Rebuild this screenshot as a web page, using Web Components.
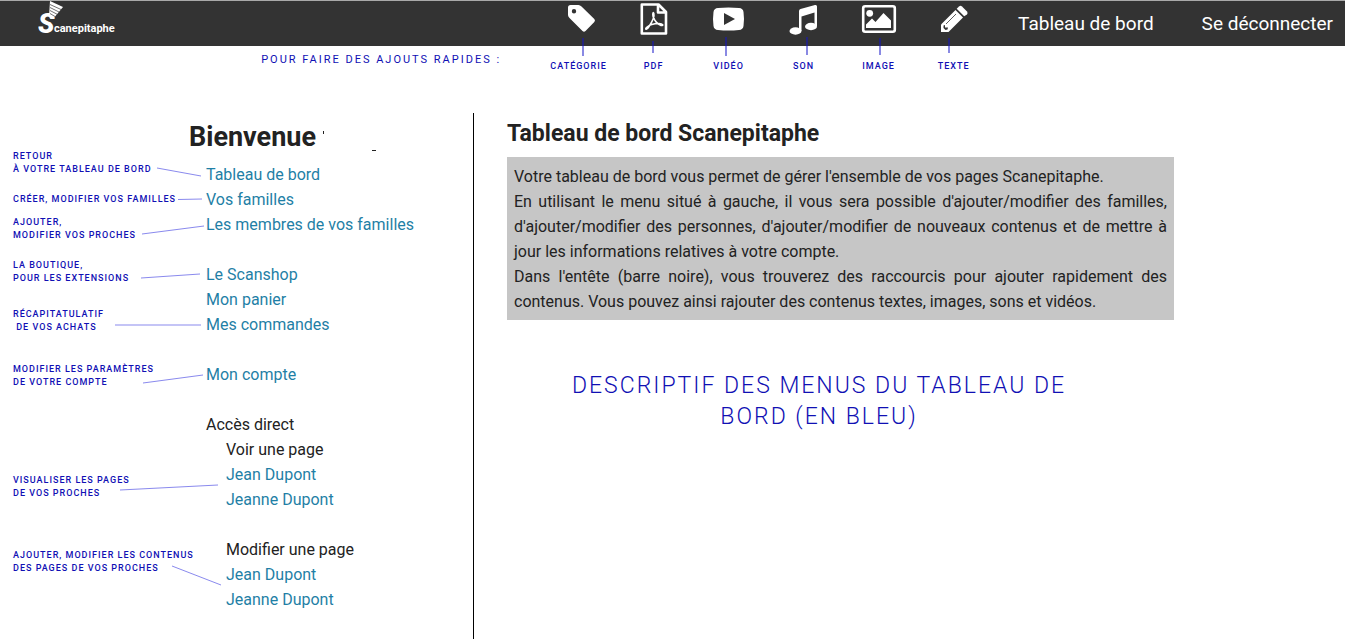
<!DOCTYPE html>
<html lang="fr">
<head>
<meta charset="utf-8">
<meta name="viewport" content="width=device-width, initial-scale=1">
<title>Tableau de bord Scanepitaphe</title>
<style>
  body {
    margin: 0;
    background: #fff;
    color: #222;
    font: 16px/25px Roboto, "Liberation Sans", sans-serif;
    --note: #1010b4;
    --link: #1f7fa6;
  }
</style>
</head>
<body>
<dashboard-page></dashboard-page>

<script>
class BaseElement extends HTMLElement {
  connectedCallback() {
    if (this.shadowRoot) return;
    const template = document.createElement('template');
    template.innerHTML = this.constructor.markup;
    this.attachShadow({ mode: 'open' }).append(template.content.cloneNode(true));
  }
}

/* Brand: a spiral-bound cone over the initial */
class SiteLogo extends BaseElement {
  static markup = `
    <style>
      :host { display: block; }
      a { display: block; color: #fff; text-decoration: none; }
      svg { display: block; }
      text { fill: #fff; font-family: Roboto, sans-serif; font-weight: 700; }
      .initial { font-size: 27px; font-weight: 900; font-style: italic; }
      .rest { font-size: 11px; }
    </style>
    <a href="#" aria-label="Scanepitaphe">
      <svg width="84" height="44" viewBox="38 1 84 44">
        <text class="initial" x="38" y="33">S</text>
        <text class="rest" x="54" y="32">canepitaphe</text>
        <path d="M50 1L63 7L53 19L49 17Z" fill="#fff"/>
        <path d="M50 4.500L61 9.500M50 7.500L59 12M50 10.500L57 14.200M50 13.500L55 16.500" stroke="#333" stroke-width=".7"/>
      </svg>
    </a>`;
}

/* Shortcut with its icon in the bar and its caption under it */
class QuickAction extends BaseElement {
  static markup = `
    <style>
      :host { display: block; width: 75px; }
      a { display: block; color: var(--note); text-decoration: none; text-align: center;
          font-size: 9px; line-height: 13px; font-weight: 500; letter-spacing: 1px; text-transform: uppercase; }
      ::slotted(svg) { display: block; }
    </style>
    <a href="#"><slot name="icon"></slot><slot></slot></a>`;
}

class SiteHeader extends BaseElement {
  static markup = `
    <style>
      :host { display: block; box-sizing: border-box; height: 46px; background: #333; border-top: 1px solid #a9a9a9; }
      header { display: flex; align-items: flex-start; padding: 0 12px 0 38px; }
      p { margin: 51px 40px 0 auto; color: var(--note); font-size: 11px; line-height: 16px;
          letter-spacing: 2px; text-transform: uppercase; white-space: nowrap; }
      .actions { display: flex; }
      .links { display: flex; gap: 48px; margin-left: 27px; }
      .links a { color: #fff; text-decoration: none; font-size: 19px; line-height: 45px; white-space: nowrap; }
      .stem { stroke: #1414c8; stroke-opacity: .5; stroke-width: 2; }
      .w { fill: #fff; }
      .k { fill: #333; }
      .o { fill: none; stroke: #fff; }
    </style>
    <header>
      <site-logo></site-logo>
      <p>Pour faire des ajouts rapides :</p>
      <div class="actions">
        <quick-action>
          <svg slot="icon" width="75" height="59" viewBox="541 1 75 59">
            <path class="w" fill-rule="evenodd" d="M570.500 5H578.500Q580 5 581.500 6.500L594.300 19Q595.700 20.500 594.300 22L585.500 31Q584 32.400 582.500 31L569.500 18Q568 16.500 568 15V7.500Q568 5 570.500 5ZM574 9A2.200 2.200 0 1 0 574 13.400A2.200 2.200 0 1 0 574 9Z"/>
            <path class="stem" d="M583 38V56"/>
          </svg>Catégorie</quick-action>
        <quick-action>
          <svg slot="icon" width="75" height="59" viewBox="616 1 75 59">
            <path class="o" stroke-width="2.600" stroke-linejoin="round" d="M641.800 4.500H658.500L666 12V33.500H641.800ZM658 4.500V12.500H666"/>
            <path class="o" stroke-width="1.600" stroke-linejoin="round" stroke-linecap="round" d="M653 13C652 17 656 24 661 25.500C664 26 663 23.500 659 23.500C654 23.500 649 25 646.500 27.500C644.500 30 647 30 649 26.500C652 22 654.500 16 653.800 13.500C653.500 12.500 653.200 12.500 653 13Z"/>
            <path class="stem" d="M653 41V53"/>
          </svg>PDF</quick-action>
        <quick-action>
          <svg slot="icon" width="75" height="59" viewBox="691 1 75 59">
            <path class="w" d="M718 8Q728.500 7 739 8Q743 8.300 743.500 12Q744.500 19 743.500 26Q743 29.700 739 30Q728.500 31 718 30Q714 29.700 713.500 26Q712.500 19 713.500 12Q714 8.300 718 8Z"/>
            <path class="k" d="M724 13L735 19L724 25Z"/>
            <path class="stem" d="M726 37V56"/>
          </svg>Vidéo</quick-action>
        <quick-action>
          <svg slot="icon" width="75" height="59" viewBox="766 1 75 59">
            <path class="w" d="M799 11Q799 9.500 800.500 9L815 5Q817 4.500 817 6.500V26H814.500V12.500L801.500 16.500V31H799Z"/>
            <ellipse class="w" cx="795.500" cy="31" rx="6" ry="3.700"/>
            <ellipse class="w" cx="811" cy="26.500" rx="6" ry="3.700"/>
            <path class="stem" d="M807 37V55"/>
          </svg>Son</quick-action>
        <quick-action>
          <svg slot="icon" width="75" height="59" viewBox="841 1 75 59">
            <rect class="o" stroke-width="2.600" x="863.200" y="6.300" width="31.600" height="25.400" rx="2"/>
            <circle class="w" cx="869.700" cy="13.300" r="3.400"/>
            <path class="w" d="M866 28V24.500L872 18.500L875.500 22L883.500 13L891 20.500V28Z"/>
            <path class="stem" d="M880 38V55"/>
          </svg>Image</quick-action>
        <quick-action>
          <svg slot="icon" width="75" height="59" viewBox="916 1 75 59">
            <path class="w" d="M941 24.500L955.500 10L963 17.500L948.500 32H941Z"/>
            <path class="w" d="M956.700 8.800L959 6.500Q960.500 5.200 962 6.500L967 11.500Q968.200 13 967 14.500L964.200 16.300Z"/>
            <path d="M946 24L956 14" stroke="#333" stroke-width=".8"/>
            <path class="k" d="M943.500 25.500L945 25V27.500H948L947.500 29.500L945.500 30L943.500 28Z"/>
            <path class="stem" d="M949 38V53"/>
          </svg>Texte</quick-action>
      </div>
      <nav class="links">
        <a href="#">Tableau de bord</a>
        <a href="#">Se déconnecter</a>
      </nav>
    </header>`;
}

class CalloutNote extends BaseElement {
  static markup = `
    <style>
      :host { display: block; color: var(--note); font-size: 9px; line-height: 13px; font-weight: 500;
              letter-spacing: 1px; text-transform: uppercase; white-space: nowrap; }
    </style><slot></slot>`;
}

class MenuGroup extends BaseElement {
  static markup = `
    <style>
      :host { display: flex; flex-direction: column; align-items: flex-start; }
      :host([nested]) { padding-left: 20px; }
      ::slotted(a) { color: var(--link); text-decoration: none; }
    </style><slot></slot>`;
}

class SideMenu extends BaseElement {
  static markup = `
    <style>
      :host { display: block; position: relative; }
      .cols { display: grid; grid-template-columns: 176px 1fr; padding-left: 13px; }
      .notes { display: grid; align-content: start; padding-top: 37px;
               grid-template-rows: 43px 23px 43px 49px 55px 111px 75px 26px; }
      h1 { display: flex; gap: 6px; margin: 0; padding: 6px 0; font-size: 27px; line-height: 37px; font-weight: 700; }
      nav { display: grid; gap: 25px; padding-left: 17px; }
      .lines { position: absolute; left: 0; top: 0; fill: none; stroke: #1414dc; stroke-opacity: .5; pointer-events: none; }
    </style>
    <div class="cols">
      <div class="notes">
        <callout-note>Retour<br>à votre tableau de bord</callout-note>
        <callout-note>Créer, modifier vos familles</callout-note>
        <callout-note>Ajouter,<br>modifier vos proches</callout-note>
        <callout-note>La boutique,<br>pour les extensions</callout-note>
        <callout-note>Récapitatulatif<br>&nbsp;de vos achats</callout-note>
        <callout-note>Modifier les paramètres<br>de votre compte</callout-note>
        <callout-note>Visualiser les pages<br>de vos proches</callout-note>
        <callout-note>Ajouter, modifier les contenus<br>des pages de vos proches</callout-note>
      </div>
      <div>
        <h1>Bienvenue
          <svg width="56" height="37" viewBox="321 119 56 37" aria-hidden="true"><path d="M322.500 131V134M371 150.500H375" stroke="#222"/></svg>
        </h1>
        <nav>
          <menu-group>
            <a href="#">Tableau de bord</a>
            <a href="#">Vos familles</a>
            <a href="#">Les membres de vos familles</a>
          </menu-group>
          <menu-group>
            <a href="#">Le Scanshop</a>
            <a href="#">Mon panier</a>
            <a href="#">Mes commandes</a>
          </menu-group>
          <menu-group>
            <a href="#">Mon compte</a>
          </menu-group>
          <menu-group>
            <span>Accès direct</span>
            <menu-group nested>
              <span>Voir une page</span>
              <a href="#">Jean Dupont</a>
              <a href="#">Jeanne Dupont</a>
            </menu-group>
          </menu-group>
          <menu-group nested>
            <span>Modifier une page</span>
            <a href="#">Jean Dupont</a>
            <a href="#">Jeanne Dupont</a>
          </menu-group>
        </nav>
      </div>
    </div>
    <svg class="lines" width="230" height="500" viewBox="0 113 230 500" aria-hidden="true">
      <path d="M157 168L201 176M178 199.500L202 199M142 234L204 226M141 278L200 274M143 383L203 375M120 490L218 485M172 566L221 585"/>
      <path d="M115 325H201" stroke-width="2" stroke-opacity=".25"/>
    </svg>`;
}

class InfoPanel extends BaseElement {
  static markup = `
    <style>
      :host { display: block; max-width: 667px; }
      h2 { margin: 0; padding: 6px 0 8px; font-size: 23px; line-height: 30px; font-weight: 700; }
      div { padding: 7px 7px 6px; background: #c6c6c6; text-align: justify; }
      ::slotted(p) { margin: 0; }
    </style>
    <h2><slot name="title"></slot></h2>
    <div><slot></slot></div>`;
}

class BigCaption extends BaseElement {
  static markup = `
    <style>
      :host { display: block; max-width: 500px; margin: 50px 0 0 62px; color: var(--note); text-align: center;
              font-size: 23px; line-height: 31px; font-weight: 300; letter-spacing: 2px; text-transform: uppercase; }
    </style><slot></slot>`;
}

class DashboardPage extends BaseElement {
  static markup = `
    <style>
      :host { display: block; }
      main { display: grid; grid-template-columns: minmax(474px, 35%) 1fr; min-height: calc(100vh - 113px); padding-top: 67px; }
      side-menu { box-sizing: border-box; border-right: 1px solid #000; }
      section { padding: 0 33px; }
    </style>
    <site-header></site-header>
    <main>
      <side-menu></side-menu>
      <section>
        <info-panel>
          <span slot="title">Tableau de bord Scanepitaphe</span>
          <p>Votre tableau de bord vous permet de gérer l'ensemble de vos pages Scanepitaphe.</p>
          <p>En utilisant le menu situé à gauche, il vous sera possible d'ajouter/modifier des familles, d'ajouter/modifier des personnes, d'ajouter/modifier de nouveaux contenus et de mettre à jour les informations relatives à votre compte.</p>
          <p>Dans l'entête (barre noire), vous trouverez des raccourcis pour ajouter rapidement des contenus. Vous pouvez ainsi rajouter des contenus textes, images, sons et vidéos.</p>
        </info-panel>
        <big-caption>Descriptif des menus du tableau de bord (en bleu)</big-caption>
      </section>
    </main>`;
}

customElements.define('site-logo', SiteLogo);
customElements.define('quick-action', QuickAction);
customElements.define('site-header', SiteHeader);
customElements.define('callout-note', CalloutNote);
customElements.define('menu-group', MenuGroup);
customElements.define('side-menu', SideMenu);
customElements.define('info-panel', InfoPanel);
customElements.define('big-caption', BigCaption);
customElements.define('dashboard-page', DashboardPage);
</script>
</body>
</html>
